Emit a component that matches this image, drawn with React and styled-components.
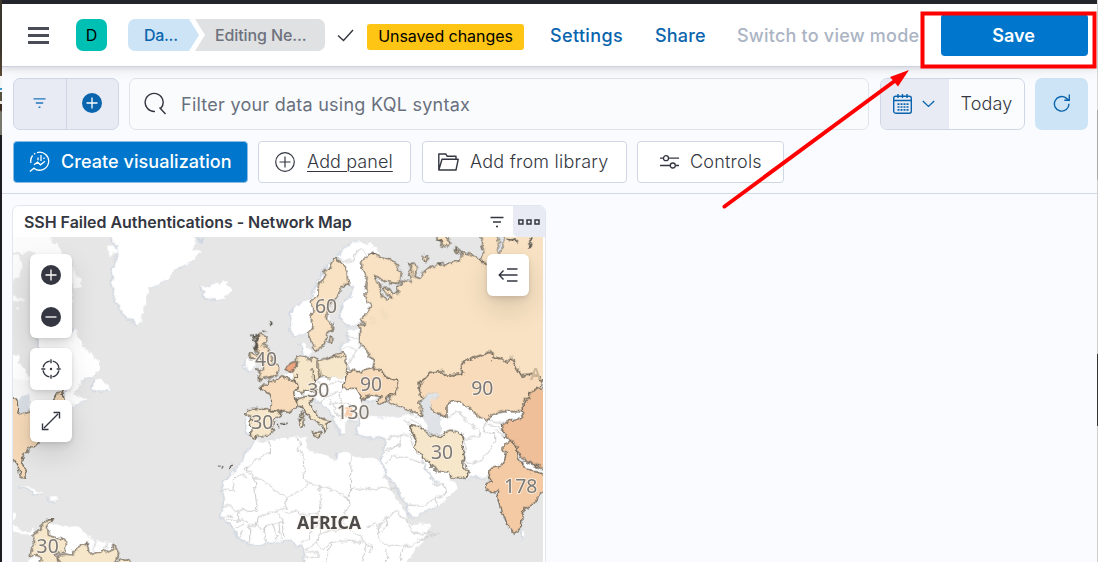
import React from 'react';
import styled, { createGlobalStyle } from 'styled-components';

const Global = createGlobalStyle`
  * { box-sizing: border-box; }
  body { margin: 0; background: #f9fbfe; font-family: Inter, "Liberation Sans", sans-serif; overflow: hidden; }
`;
const Frame = styled.div`
  display: grid;
  grid-template-columns: 2px 1fr 1px;
  width: 1098px;
  height: 562px;
  position: relative;
  overflow: hidden;
`;
const EdgeLeft = styled.div`
  background: linear-gradient(#3d372c 0 48px, #5c4a35 76px, #f4f4f4 76px 88px, #3a9ad0 88px 90px, #f4f4f4 90px 92px, #55503f 92px 101px, #e8e4dc 101px 104px, #3a2a20 104px 110px, #77776b 112px 135px, #1e1e22 135px);
`;
const EdgeRight = styled.div`
  background: linear-gradient(#d8d8d8 0 110px, #a9a9a5 110px 180px, #cfcfcf 180px 354px, #333 354px 426px, #cfcfcf 426px);
`;
const Page = styled.div`
  display: flex;
  flex-direction: column;
  min-width: 0;
`;
const TopStrip = styled.div`
  height: 4px;
  background: #25262e;
  flex: none;
`;
const Header = styled.header`
  height: 63px;
  flex: none;
  display: flex;
  align-items: center;
  background: #fff;
  border-bottom: 1px solid #cbd2df;
  box-shadow: 0 2px 5px rgba(60, 65, 80, 0.13), 0 5px 12px rgba(60, 65, 80, 0.06);
  padding: 0 9px 0 26px;
  z-index: 1;
`;
const Burger = styled.div`
  width: 21px;
  height: 17px;
  display: flex;
  flex-direction: column;
  justify-content: space-between;
  i { height: 3px; background: #4a4d57; }
`;
const Avatar = styled.div`
  width: 31px;
  height: 32px;
  margin-left: 27px;
  border-radius: 7px;
  background: #00bfb3;
  display: grid;
  place-items: center;
  padding-bottom: 1px;
  font-size: 16px;
  color: #000;
`;
const Crumbs = styled.nav`
  display: flex;
  height: 32px;
  margin-left: 21px;
`;
const Crumb = styled.span`
  height: 32px;
  line-height: 33px;
  font-size: 16px;
  white-space: nowrap;
  font-weight: ${(p) => (p.$first ? 500 : 450)};
  color: ${(p) => (p.$first ? '#0a65ae' : '#6e727d')};
  background: ${(p) => (p.$first ? '#cce4f5' : '#e0e1e3')};
  width: ${(p) => (p.$first ? 71 : 130)}px;
  padding-left: ${(p) => (p.$first ? 16 : 20)}px;
  margin-left: ${(p) => (p.$first ? 0 : -4)}px;
  letter-spacing: ${(p) => (p.$first ? -0.3 : -0.1)}px;
  border-radius: ${(p) => (p.$first ? '7px 0 0 7px' : '0 7px 7px 0')};
  clip-path: ${(p) =>
    p.$first
      ? 'polygon(0 0, 61px 0, 71px 50%, 61px 100%, 0 100%)'
      : 'polygon(0 0, 100% 0, 100% 100%, 0 100%, 10px 50%)'};
`;
const Tick = styled.svg`
  margin-left: 12px;
`;
const Badge = styled.span`
  height: 26px;
  width: 157px;
  margin-left: 13px;
  margin-top: 3px;
  border-radius: 3px;
  background: #fec514;
  color: #000;
  font-size: 16px;
  line-height: 25px;
  letter-spacing: -0.05px;
  text-align: center;
  white-space: nowrap;
`;
const HeaderLink = styled.a`
  margin-left: ${(p) => p.$gap}px;
  width: ${(p) => p.$w}px;
  font-size: 18px;
  font-weight: 500;
  letter-spacing: ${(p) => p.$ls}px;
  white-space: nowrap;
  padding-top: 1px;
  color: ${(p) => (p.$muted ? '#abb4c4' : '#0a65ae')};
`;
const SaveButton = styled.button`
  margin-left: auto;
  width: 147px;
  height: 42px;
  border: 0;
  padding: 0 2px 0 0;
  border-radius: 4px;
  background: #0077cc;
  color: #fff;
  font: 600 18px Inter, sans-serif;
`;
const QueryBar = styled.div`
  display: flex;
  height: 52px;
  margin: 11px 9px 0 11px;
  flex: none;
`;
const FilterGroup = styled.div`
  display: grid;
  grid-template-columns: 52px 1fr;
  width: 106px;
  border: 1px solid #cfd7e6;
  border-radius: 7px;
  background: #e8ebf4;
`;
const GroupItem = styled.div`
  display: grid;
  place-items: center;
  padding: 0 1px 3px 0;
  & + & { border-left: 1px solid #cfd7e6; }
`;
const SearchField = styled.div`
  margin-left: 10px;
  width: 740px;
  border: 1px solid #e0e4ec;
  border-radius: 7px;
  background: #fafbfd;
  display: flex;
  align-items: center;
  padding-left: 13px;
  gap: 14px;
  font-size: 18px;
  font-weight: 380;
  letter-spacing: 0.25px;
  color: #69707d;
`;
const DatePicker = styled.div`
  margin-left: 11px;
  width: 145px;
  display: flex;
  border: 1px solid #cfd7e6;
  border-radius: 7px;
  background: #fbfcfd;
  overflow: hidden;
`;
const DateButton = styled.div`
  width: 68px;
  background: #e8ebf4;
  display: flex;
  align-items: center;
  padding-left: 12px;
  gap: 10px;
`;
const DateText = styled.div`
  flex: 1;
  text-align: center;
  font-size: 18px;
  font-weight: 360;
  letter-spacing: 0.2px;
  line-height: 50px;
  color: #343741;
`;
const Refresh = styled.div`
  margin-left: 10px;
  width: 53px;
  border-radius: 7px;
  background: #cce4f5;
  display: grid;
  place-items: center;
  padding-bottom: 2px;
`;
const Toolbar = styled.div`
  display: flex;
  height: 64px;
  flex: none;
  padding: 11px 0 0 11px;
  border-bottom: 1px solid #d3dae6;
`;
const ToolButton = styled.div`
  height: 42px;
  width: ${(p) => p.$w}px;
  margin-right: ${(p) => p.$gap ?? 11}px;
  padding: 0 0 1px ${(p) => p.$pad ?? 15}px;
  display: flex;
  align-items: center;
  gap: ${(p) => p.$inner ?? 11}px;
  border-radius: 4px;
  border: 1px solid ${(p) => (p.$primary ? '#8dbbe2' : '#cfd7e6')};
  background: ${(p) => (p.$primary ? '#0077cc' : '#fff')};
  background-clip: border-box;
  color: ${(p) => (p.$primary ? '#fff' : '#343741')};
  font-size: 18px;
  font-weight: ${(p) => (p.$primary ? 500 : 360)};
  letter-spacing: ${(p) => p.$ls ?? 0.22}px;
  white-space: nowrap;
  svg { flex: none; }
`;
const Underlined = styled.span`
  text-decoration: underline;
  text-underline-offset: 3px;
  text-decoration-thickness: 1px;
  letter-spacing: 0.1px;
  margin-left: 1px;
`;
const Panel = styled.section`
  width: 534px;
  margin: 11px 0 0 10px;
  height: 400px;
  flex: none;
  border: 1px solid #e1e6f0;
  border-radius: 7px 7px 0 0;
  background: #fff;
  overflow: hidden;
`;
const PanelHead = styled.div`
  display: flex;
  height: 31px;
  align-items: center;
`;
const PanelTitle = styled.h2`
  margin: 0;
  flex: 1;
  padding: 0 0 0 11px;
  font-size: 16px;
  font-weight: 600;
  letter-spacing: -0.04px;
  color: #343741;
`;
const PanelMenu = styled.div`
  width: 32px;
  height: 31px;
  margin-left: 9px;
  background: #e8ebf4;
  border-bottom-left-radius: 5px;
  display: grid;
  place-items: center;
`;
const MapArea = styled.div`
  position: relative;
  width: 530px;
  height: 325px;
  > svg { display: block; }
`;
const MapControls = styled.div`
  position: absolute;
  left: 16.5px;
  top: 16.5px;
  display: flex;
  flex-direction: column;
  gap: 10px;
`;
const MapButton = styled.div`
  width: 42px;
  height: ${(p) => (p.$tall ? 84 : 42)}px;
  border-radius: 6px;
  background: #fff;
  display: grid;
  place-items: center;
  box-shadow: 0 1px 4px rgba(0, 0, 0, 0.09), 0 4px 10px rgba(0, 0, 0, 0.08), 0 12px 28px rgba(0, 0, 0, 0.12);
`;
const LegendSlot = styled.div`
  position: absolute;
  left: 473.5px;
  top: 16.5px;
`;
const Annotation = styled.svg`
  position: absolute;
  left: 0;
  top: 0;
  z-index: 5;
  pointer-events: none;
`;

const W = '#ffffff';
const T1 = '#f7e7ca';
const T2 = '#f8e2c3';
const T3 = '#f7dbbb';

const Land = ({ d }) => (
  <>
    <path d={d} fill="none" stroke="#cdd6e1" strokeWidth="5" strokeLinejoin="round" transform="translate(-4,2)" opacity=".75" />
    <path d={d} fill={W} />
  </>
);
const Hit = ({ d, f }) => (
  <path d={d} fill={f} stroke="#746b5e" strokeWidth="4" strokeLinejoin="round" />
);
const Lines = ({ d }) => <path d={d} fill="none" stroke="#cbcbcb" strokeWidth="3" strokeLinejoin="round" />;
const Label = ({ x, y, children, size = 58, bold }) => (
  <text
    x={x} y={y} textAnchor="middle" fontFamily="'Noto Sans', 'Open Sans', sans-serif" fontSize={size}
    fontWeight={bold ? 700 : 400} fill={bold ? '#4b4b4b' : '#7b7976'} stroke="#fbf3e8" strokeWidth="6" strokeOpacity=".8" paintOrder="stroke"
  >
    {children}
  </text>
);

const WorldMap = () => (
  <svg width="530" height="325" viewBox="40 711 1590 975">
    <defs>
      <filter id="coast" filterUnits="userSpaceOnUse" x="0" y="680" width="1700" height="1050" colorInterpolationFilters="sRGB">
        <feTurbulence type="fractalNoise" baseFrequency="0.05" numOctaves="3" seed="7" />
        <feDisplacementMap in="SourceGraphic" scale="20" xChannelSelector="R" yChannelSelector="G" />
      </filter>
    </defs>
    <rect x="0" y="700" width="1700" height="1000" fill="#e6e6e6" />
    <g filter="url(#coast)">
    <g transform="translate(0,600)">
      <Land d="M330,90 L340,125 355,135 358,150 352,175 345,200 338,215 340,235 337,255 345,275 350,300 365,325 372,345 383,354 400,355 412,373 420,368 425,345 430,325 440,305 442,280 450,262 475,255 500,240 520,215 540,200 555,198 580,180 592,165 610,150 590,150 578,148 586,130 588,90Z" />
      <path d="M325,135 L345,138 357,152 345,160 330,165 322,155Z" fill={W} />
      <path d="M590,112 L610,132 605,115" fill="none" stroke="#cbd5e1" strokeWidth="5" />
      <path d="M20,90 L150,90 158,125 185,145 190,162 215,190 222,222 246,240 240,265 225,262 215,245 217,315 120,300 100,155 70,158 20,152Z" fill="#fbfbfb" />
      <path d="M20,160 L62,165 68,200 62,225 50,240 20,245Z M20,275 L60,295 78,300 60,305 20,300Z M46,325 L58,320 54,332Z" fill="#fbfbfb" />
      <Land d="M118,440 L118,410 215,405 225,383 240,410 250,440 275,460 300,485 302,505 290,518 280,530 250,535 238,560 215,590 100,640 20,640 20,460 55,462 60,490 80,520 100,530Z" />
    </g>
    <g transform="translate(0,1140)">
      <path d="M20,0 L215,0 210,100 20,100Z" fill="#f8f8f8" />
      <path d="M60,55 L90,40 90,90 62,104 52,95Z" fill="#d9dee5" />
      <Land d="M195,58 L200,30 215,40 245,52 262,58 245,70 215,80Z" />
      <Land d="M287,-5 L300,-5 318,10 330,15 328,32 300,30 288,32 277,25Z" />
      <Hit f="#f5d9b8" d="M20,25 L45,52 55,65 52,95 60,105 90,95 165,60 172,38 188,34 194,58 115,187 95,205 75,218 68,235 66,250 75,268 80,285 72,295 62,290 55,262 46,245 20,230Z" />
      <Land d="M62,318 L80,319 110,328 130,342 110,340 90,330Z" />
      <Land d="M150,350 L180,355 168,363 152,362Z" />
      <path d="M30,395 L48,400 45,430 60,450 90,455 105,442 100,465 70,462 30,450Z" fill={W} />
      <Land d="M140,440 L150,430 165,437 180,432 205,438 235,440 258,460 270,472 285,485 300,480 320,487 345,490 345,560 150,560Z" />
      <path d="M80,560 L100,528 125,532 135,580Z" fill={W} />
      <Hit f={T1} d="M162,420 L145,420 130,430 122,438 120,450 100,465 105,490 95,505 92,525 120,533 135,570 180,570 170,520 197,516 197,480 175,475 150,468 148,452 140,440 150,428Z" />
      <Hit f={T1} d="M172,570 L178,525 200,522 215,525 235,500 255,496 262,486 268,515 280,523 300,515 325,514 345,495 358,522 345,545 370,538 390,545 400,570Z" />
      <Lines d="M285,485 L280,505 290,515 M320,487 L316,514" />
    </g>
    <g transform="translate(570,600)">
      <Land d="M35,255 L50,262 65,255 85,254 100,245 115,245 115,260 123,272 110,288 85,302 65,293 50,295 40,285 50,275 38,268Z" />
      <Land d="M305,345 L310,327 325,318 345,305 365,292 375,270 380,255 400,220 420,190 440,172 460,150 485,130 510,122 545,132 570,160 570,320 530,345 510,365 485,378 465,370 455,350 460,310 485,285 497,265 480,250 450,255 420,330 420,360 400,400 365,390 345,400 320,408 305,392Z" />
      <Lines d="M430,182 L450,175 475,185 495,180 500,155 515,150 530,165" />
      <Land d="M335,428 L345,423 350,445 362,440 365,455 355,465 342,462Z" />
      <Land d="M455,440 L465,430 480,425 475,395 505,385 520,390 515,430 550,455 570,520 475,520 470,470 455,460Z" />
      <Lines d="M455,450 L475,440 500,450 515,440 M475,405 L505,415 M500,450 L490,475 475,485" />
      <Hit f={T2} d="M440,178 L462,190 472,215 475,255 455,257 445,285 430,305 415,325 410,355 428,375 425,390 408,405 408,430 400,440 385,447 378,455 370,435 358,415 358,395 370,380 365,355 370,335 365,300 385,290 385,270 382,262 405,230 405,215 422,200 430,185Z" />
      <Hit f={T1} d="M423,410 L430,415 426,430 418,425Z" />
      <Land d="M170,478 L195,475 200,500 185,510 168,505Z" />
      <Hit f={T2} d="M200,405 L215,402 235,412 230,427 215,434 235,442 240,460 250,485 267,495 266,515 255,527 235,532 205,540 215,522 203,512 222,502 215,480 208,460 195,445 200,430Z" />
      <Hit f={T2} d="M178,465 L190,458 202,462 198,475 185,475Z" />
      <path d="M185,405 L196,410 188,425 M192,425 L204,445 190,440 M198,400 L208,410 196,432 M237,364 L243,370 239,378 M222,395 L228,390" stroke="#55524c" strokeWidth="6" fill="none" />
      <Hit f={T1} d="M333,465 L345,470 355,478 380,475 388,490 385,510 390,530 380,537 370,545 375,560 365,572 345,575 325,570 320,548 310,540 310,515 320,500 320,480Z" />
      <Hit f={T1} d="M385,485 L410,475 435,466 465,470 472,490 475,515 470,530 472,545 455,542 430,538 390,530 385,510Z" />
      <Hit f={T2} d="M436,464 L460,458 465,470 440,471Z" />
      <Hit f="#eda580" d="M288,506 L300,492 318,487 315,508 302,518Z" />
    </g>
    <g transform="translate(570,1140)">
      <Land d="M315,35 L350,35 370,10 382,-5 480,-5 560,-30 560,60 545,60 520,60 510,90 500,118 475,120 465,135 467,160 455,162 445,140 430,105 415,85 390,65 375,50 340,55 315,55Z" />
      <path d="M282,-15 L310,-22 312,0 300,-2Z" fill={W} />
      <Lines d="M370,-5 L400,15 460,5 M400,15 L385,35 410,50 450,35 460,20 M410,50 L430,75 455,65 450,35 M455,65 L500,85 M430,75 L440,105 455,120 M390,65 L410,50 M455,100 L440,105 M340,48 L345,35" />
      <path d="M465,82 L490,85 488,112 466,108Z" fill="#f8cfae" />
      <Hit f={T3} d="M270,-10 L285,-8 300,0 325,8 325,20 315,35 318,60 320,75 318,85 300,95 283,92 262,97 240,90 243,60 240,45 228,35 212,26 212,15 235,15 240,0 255,3Z" />
      <Hit f={T1} d="M318,0 L325,-30 370,-30 372,10 380,28 365,35 345,30 338,36 318,30 325,20 322,8Z" />
      <path d="M320,-35 L368,-35 368,8 326,8Z" fill={T1} />
      <Land d="M172,115 L190,112 182,160 172,158Z" />
      <Hit f={T1} d="M170,90 L190,85 215,86 245,95 280,98 275,110 255,118 248,140 250,155 235,165 205,168 200,177 190,170 182,165 185,145 182,130 190,110 168,105Z" />
      <Hit f={T1} d="M320,60 L330,55 345,50 368,48 370,60 360,70 370,88 385,108 405,118 425,125 412,132 412,148 403,158 400,140 380,128 362,115 345,95 338,80 322,78Z" />
      <Hit f={T1} d="M367,158 L395,155 392,168 378,165Z M335,95 L341,100 338,112 332,110Z M328,118 L343,118 343,138 333,142Z" />
      <path d="M262,140 L268,136 M274,132 L284,134 M288,130 L292,132 M85,256 L90,258 M97,260 L102,264 M118,264 L125,254" stroke="#55524c" strokeWidth="6" fill="none" />
      <Land d="M205,180 L235,185 260,175 330,167 350,170 345,190 355,210 370,215 400,225 435,240 445,235 445,220 470,215 485,228 520,232 560,235 575,262 595,310 615,350 640,385 652,405 652,425 665,435 700,432 725,430 715,460 690,495 640,560 345,560 345,510 335,500 320,490 305,478 285,480 250,487 180,492 160,480 150,470 130,440 110,425 97,410 100,380 108,365 105,345 95,330 115,290 140,265 165,240 170,215 190,195Z" />
      <Lines d="M238,185 L240,215 190,250 170,258 170,275 M170,270 L290,355 362,312 390,317 472,348 482,345 484,228 M325,170 L330,200 322,205 340,230 345,300 362,312 M484,325 L620,325 M170,287 L135,287 133,330 95,332 M192,290 L202,390 145,392 M192,295 L205,298 M100,380 L125,380 145,395 148,420 M97,410 L125,408 M110,420 L148,420 172,428 180,450 180,490 M120,435 L140,445 160,435 M150,470 L165,450 M290,355 L288,380 258,395 235,400 205,415 200,435 180,440 M200,435 L215,445 250,430 285,425 258,395 M228,435 L226,488 M250,430 L262,480 M268,430 L272,478 M285,395 L310,395 345,405 385,400 395,360 390,317 M285,425 L278,440 285,478 M472,348 L475,385 460,410 470,440 M385,400 L390,430 370,445 355,480 330,490 M390,430 L395,460 430,450 470,440 500,460 530,490 M395,460 L380,490 345,510 M380,490 L400,510 425,490 M345,515 L385,515 385,535 345,530 M425,490 L410,546 M425,490 L480,480 530,490 550,500 540,520 M530,440 L560,430 565,460 590,440 590,410 620,395 M565,460 L575,490 620,495 665,500 690,480 750,460 M620,395 L650,420 670,460 740,460 M590,410 L560,450 M640,500 L632,546 M530,490 L520,546 M592,510 L590,546" />
    </g>
    <g transform="translate(1080,1140)">
      <Land d="M-5,145 L5,118 30,110 60,115 100,112 130,105 160,105 190,112 205,130 205,160 245,160 240,110 262,55 295,55 355,100 380,122 405,100 430,90 495,90 485,118 428,130 460,180 440,200 440,215 430,250 395,270 375,295 350,290 318,295 270,285 262,295 250,305 230,303 212,280 195,250 185,240 192,262 210,290 222,310 245,305 260,290 275,305 292,315 290,330 265,350 255,365 235,380 200,392 155,413 150,405 145,375 125,345 105,310 85,280 75,265 68,250 65,240 75,215 80,170 60,170 40,175 10,170 -5,160Z" />
      <path d="M200,45 L240,40 240,55 215,62 210,78 215,95 230,105 248,118 245,160 225,168 205,158 200,130 188,108 180,80 185,60Z" fill="#dfe2e6" />
      <Lines d="M82,175 L150,160 M125,170 L120,195 80,220 M120,195 L75,215 M150,160 L165,205 185,238 M80,250 L100,225 130,230 190,250 M145,375 L190,378 225,355 258,345 255,320 215,310 M225,355 L235,380 M262,110 L300,95 320,125 360,155 365,165 310,180 M305,165 L320,195 312,210 320,250 360,245 385,215 405,185 405,160 375,155 M375,155 L370,140 385,120 430,128 M385,120 L375,135 420,140 435,165 M405,150 L440,170 M130,118 L145,130 155,140 M150,118 L170,125 190,140" />
      <Hit f={T3} d="M-35,-30 L0,-25 40,-35 60,-30 75,-10 110,0 115,15 108,38 88,48 75,55 85,60 70,70 58,68 55,58 62,50 40,45 22,50 15,60 5,65 5,50 -10,25 -50,25 -45,5Z" />
      <Hit f={T1} d="M150,135 L165,140 185,138 190,150 205,158 225,168 250,165 255,155 275,150 305,162 310,190 305,210 315,225 312,255 328,275 318,295 270,290 265,275 240,275 215,258 205,240 190,240 180,215 165,205 172,190 162,165 155,155Z" />
      <Hit f={T3} d="M575,-5 L547,5 540,25 510,38 510,55 490,65 492,95 430,95 405,100 380,122 355,105 330,85 295,65 262,65 262,110 245,105 228,95 210,80 205,55 232,52 232,42 210,42 190,55 180,40 178,10 200,-10 215,-25 245,-25 255,-15 270,-15 312,-20 305,-45 310,-58 365,-72 385,-83 400,-82 400,-65 425,-65 435,-55 455,-65 470,-40 485,-15 520,-20 535,-5 575,5Z" />
      <path d="M208,40 L236,40 234,54 212,60 212,85 190,62 195,50Z" fill="#dfe2e6" />
      <Hit f="#eebf98" d="M580,18 L540,25 510,38 510,55 490,65 492,100 480,115 428,130 430,150 440,170 455,182 475,200 480,230 510,245 545,265 580,265Z" />
      <Hit f="#f3caa3" d="M430,192 L455,182 475,205 472,235 485,250 492,262 530,278 580,275 580,320 535,350 520,370 495,385 488,400 485,440 475,452 462,460 450,445 425,395 412,345 415,325 395,338 380,325 378,310 398,308 388,290 392,265 420,260 435,240 440,215 430,210Z" />
      <Hit f={W} d="M485,248 L500,245 545,265 580,268 580,278 520,275 490,262Z" />
      <Land d="M489,450 L495,458 497,472 491,477Z" />
    </g>
    <g transform="translate(1080,600)">
      <Hit f={T2} d="M45,160 L60,170 85,175 110,195 125,215 123,240 110,250 80,245 50,232 40,226 60,255 64,285 85,300 95,292 80,280 70,262 85,262 100,282 115,280 112,262 130,240 155,250 150,230 160,205 145,190 165,190 175,205 160,225 180,235 190,220 215,200 235,185 245,198 270,190 300,185 305,165 300,157 330,162 360,178 378,195 362,175 372,150 362,130 370,90 580,90 580,550 535,535 520,520 485,525 470,500 455,475 435,485 425,475 400,475 400,458 385,457 365,468 310,482 305,495 312,520 270,525 255,525 245,515 215,515 200,530 178,550 180,580 190,595 180,605 183,630 190,650 155,635 130,625 95,608 88,588 108,578 113,550 110,540 75,530 62,510 40,503 45,480 28,470 25,450 0,435 0,390 -5,375 20,375 5,360 35,320 20,295 18,260 22,235 12,210 5,190 15,170 30,160Z" />
      <path d="M410,95 L432,95 430,140 420,165 412,150 420,130Z" fill="#dfe3e8" stroke="#746b5e" strokeWidth="3" />
      <Hit f={T2} d="M225,95 L262,115 277,132 262,138 240,132Z M285,140 L300,150 292,158Z M190,172 L200,166 207,178 195,188Z" />
      <path d="M440,112 L472,125 M512,112 L512,145 M506,130 L518,135 M230,118 L250,128 M235,188 L252,186 M36,158 L48,162" stroke="#67625a" strokeWidth="7" fill="none" />
      <path d="M28,345 q25,5 25,25 q-12,10 -25,0Z M65,325 q20,5 24,30 q-15,8 -26,-10Z" fill="#f3dec0" />
    </g>
    </g>
    <text x="1608" y="1140" textAnchor="middle" fontFamily="'Noto Sans', sans-serif" fontSize="50" fontWeight="600" fill="#cdb799">A</text>
    <Label x="979" y="940">60</Label>
    <Label x="799" y="1098">40</Label>
    <Label x="956" y="1192">30</Label>
    <Label x="1114" y="1172">90</Label>
    <Label x="1448" y="1184">90</Label>
    <Label x="1060" y="1256">130</Label>
    <Label x="788" y="1286">30</Label>
    <Label x="1327" y="1376">30</Label>
    <Label x="1563" y="1478">178</Label>
    <Label x="144" y="1660">30</Label>
    <Label x="988" y="1587" size="53" bold>AFRICA</Label>
  </svg>
);

const ink = '#343741';
const blue = '#0a65ae';
const FilterIcon = ({ c = ink, w = 14 }) => (
  <svg width={w} height="12" viewBox="0 0 14 12" fill="none" stroke={c} strokeWidth="1.5">
    <path d="M.5 1.5h13M3 6h8M6 10.5h2" />
  </svg>
);
const RoundIcon = ({ minus }) => (
  <svg width="20" height="20" viewBox="0 0 20 20">
    <circle cx="10" cy="10" r="10" fill={ink} />
    <path d={minus ? 'M4.5 10h11' : 'M4.5 10h11M10 4.5v11'} stroke="#fff" strokeWidth="1.3" />
  </svg>
);

export default function App() {
  return (
    <Frame>
      <Global />
      <EdgeLeft />
      <Page>
        <TopStrip />
        <Header>
          <Burger><i /><i /><i /></Burger>
          <Avatar>D</Avatar>
          <Crumbs>
            <Crumb $first>Da...</Crumb>
            <Crumb>Editing Ne...</Crumb>
          </Crumbs>
          <Tick width="17" height="13" viewBox="0 0 17 13" fill="none" stroke={ink} strokeWidth="1.4"><path d="M1 6.5l5.5 5L16 1" /></Tick>
          <Badge>Unsaved changes</Badge>
          <HeaderLink $gap={26} $w={73} $ls={0.35}>Settings</HeaderLink>
          <HeaderLink $gap={32} $w={50} $ls={0.2}>Share</HeaderLink>
          <HeaderLink $gap={32} $w={183} $ls={0.22} $muted>Switch to view mode</HeaderLink>
          <SaveButton>Save</SaveButton>
        </Header>
        <QueryBar>
          <FilterGroup>
            <GroupItem><FilterIcon c="#1f78bf" w={13} /></GroupItem>
            <GroupItem>
              <svg width="20" height="20" viewBox="0 0 20 20"><circle cx="10" cy="10" r="10" fill="#0a65ae" /><path d="M4.5 10h11M10 4.5v11" stroke="#fff" strokeWidth="1.3" /></svg>
            </GroupItem>
          </FilterGroup>
          <SearchField>
            <svg width="24" height="24" viewBox="0 0 24 24" fill="none" stroke={ink} strokeWidth="1.4"><path d="M12 19.4a9 9 0 1 1 5.8-2.9M16.5 15.5L22.5 22" /></svg>
            <span>Filter your data using KQL syntax</span>
          </SearchField>
          <DatePicker>
            <DateButton>
              <svg width="19" height="20" viewBox="0 0 19 20" fill="none" stroke={blue} strokeWidth="1.4">
                <rect x=".7" y="2.2" width="17.6" height="17" rx="2" />
                <path d="M.7 6.5h17.600M5 0v4M9.5 0v4M14 0v4" />
                <path d="M4.5 10.2h11M4.5 13h11M4.5 15.8h11" strokeDasharray="2 1" strokeWidth="1.7" />
              </svg>
              <svg width="13" height="8" viewBox="0 0 13 8" fill="none" stroke={blue} strokeWidth="1.4"><path d="M.8 1l5.7 5.4L12.2 1" /></svg>
            </DateButton>
            <DateText>Today</DateText>
          </DatePicker>
          <Refresh>
            <svg width="18" height="18" viewBox="0 0 18 18" fill="none" stroke={blue} strokeWidth="1.4"><path d="M16 9.8A7.3 7.3 0 1 1 13.200 4.100L15.500 6M16.300 .5v5.800h-5" /></svg>
          </Refresh>
        </QueryBar>
        <Toolbar>
          <ToolButton $primary $w={235} $gap={10} $ls={0.06} $inner={11}>
            <svg width="21" height="21" viewBox="0 0 21 21" fill="none" stroke="#fff" strokeWidth="1.3">
              <path d="M8 1.6A9 9 0 1 1 5 17.2L.8 20.5M1.9 12A9 9 0 0 1 3.6 4.5M5 3.2l1.200-.9" />
              <path d="M5 13.8l3.500-2.600 3 2.600 4.500-3.500M9 6.5v2.700M12 4v6M15 6.5v1.500" />
            </svg>
            Create visualization
          </ToolButton>
          <ToolButton $w={153} $pad={16}>
            <svg width="20" height="20" viewBox="0 0 20 20" fill="none" stroke={ink} strokeWidth="1.2"><circle cx="10" cy="10" r="9.3" /><path d="M4.5 10h11M10 4.5v11" /></svg>
            <Underlined>Add panel</Underlined>
          </ToolButton>
          <ToolButton $w={205} $gap={10}>
            <svg width="21" height="18" viewBox="0 0 21 18" fill="none" stroke={ink} strokeWidth="1.4" strokeLinejoin="round"><path d="M.8 17V1h7l1.500 2.300H18v3M.8 17L4 6.300h16.200L18 17z" /></svg>
            Add from library
          </ToolButton>
          <ToolButton $w={147} $pad={22}>
            <svg width="19" height="14" viewBox="0 0 19 14" fill="none" stroke={ink} strokeWidth="1.3"><path d="M0 3.200h3.500M8.500 3.200H19M0 10.500h10M15.500 10.500H19" /><circle cx="6" cy="3.2" r="2.5" /><circle cx="12.8" cy="10.5" r="2.5" /></svg>
            Controls
          </ToolButton>
        </Toolbar>
        <Panel>
          <PanelHead>
            <PanelTitle>SSH Failed Authentications - Network Map</PanelTitle>
            <FilterIcon />
            <PanelMenu>
              <svg width="22" height="6" viewBox="0 0 22 6" fill="none" stroke={ink} strokeWidth="1.5"><path d="M.9.9h4v4h-4zM9 .9h4v4H9zM17 .9h4v4h-4z" /></svg>
            </PanelMenu>
          </PanelHead>
          <MapArea>
            <WorldMap />
            <MapControls>
              <MapButton $tall><RoundIcon /><RoundIcon minus /></MapButton>
              <MapButton>
                <svg width="20" height="20" viewBox="0 0 20 20" fill="none" stroke={ink} strokeWidth="1.4"><circle cx="10" cy="10" r="8" strokeDasharray="9.570 3" strokeDashoffset="-1.5" /><path d="M10 .3v4M10 15.700v4M.3 10h4M15.700 10h4" /><circle cx="10" cy="10" r="1.2" fill={ink} stroke="none" /></svg>
              </MapButton>
              <MapButton>
                <svg width="20" height="20" viewBox="0 0 20 20" fill="none" stroke={ink} strokeWidth="1.4"><path d="M3 17L17 3M12.500 1.500h6v6M1.500 12.500v6h6" /></svg>
              </MapButton>
            </MapControls>
            <LegendSlot>
              <MapButton>
                <svg width="20" height="14" viewBox="0 0 20 14" fill="none" stroke={ink} strokeWidth="1.4"><path d="M9 1h10.500M1.500 7h18M9 13h10.500M5.500 2.500L1.200 7l4.300 4.500" /></svg>
              </MapButton>
            </LegendSlot>
          </MapArea>
        </Panel>
      </Page>
      <EdgeRight />
      <Annotation width="1098" height="562" viewBox="0 0 1098 562">
        <rect x="922.5" y="13.5" width="172" height="53" fill="none" stroke="#f00" strokeWidth="4" />
        <path d="M724.5 206.5L896 80" stroke="#f00" strokeWidth="4" strokeLinecap="round" />
        <path d="M909 70L890 77L898 86.5Z" fill="#f00" />
      </Annotation>
    </Frame>
  );
}
